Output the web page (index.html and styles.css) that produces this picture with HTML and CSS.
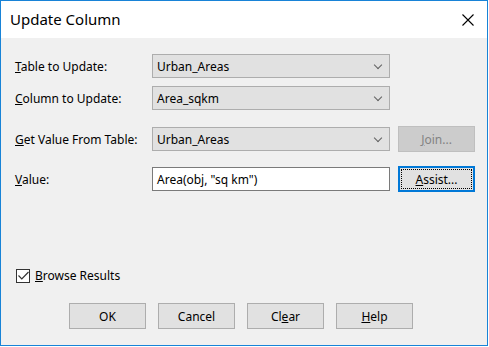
FILE: index.html
```html
<!DOCTYPE html>
<html lang="en">
<head>
  <meta charset="UTF-8">
  <title>Update Column</title>
  <link rel="stylesheet" href="styles.css">
</head>
<body>

  <div class="window">
    <div class="titlebar">
      <span class="title">Update Column</span>
      <svg class="close" width="12" height="12" viewBox="0 0 12 12">
        <path d="M0.5 0.5 L11.5 11.5 M11.5 0.5 L0.5 11.5" stroke="#000" stroke-width="1.1" fill="none"/>
      </svg>
    </div>

    <div class="content">
      <div class="row">
        <label><u>T</u>able to Update:</label>
        <div class="combo">Urban_Areas<span class="arrow"></span></div>
      </div>
      <div class="row gap-small">
        <label><u>C</u>olumn to Update:</label>
        <div class="combo">Area_sqkm<span class="arrow"></span></div>
      </div>
      <div class="row">
        <label><u>G</u>et Value From Table:</label>
        <div class="combo">Urban_Areas<span class="arrow"></span></div>
        <button class="btn disabled"><u>J</u>oin...</button>
      </div>
      <div class="row">
        <label><u>V</u>alue:</label>
        <div class="textbox">Area(obj, "sq km")</div>
        <button class="btn focused"><span class="focus-rect"><u>A</u>ssist...</span></button>
      </div>

      <div class="check-row">
        <span class="checkbox">
          <svg width="11" height="9" viewBox="0 0 11 9">
            <path d="M0.5 4.5 L3.8 7.8 L10.5 1" stroke="#333" stroke-width="1.2" fill="none"/>
          </svg>
        </span>
        <span><u>B</u>rowse Results</span>
      </div>

      <div class="buttons">
        <button class="btn">OK</button>
        <button class="btn">Cancel</button>
        <button class="btn">Cl<u>e</u>ar</button>
        <button class="btn"><u>H</u>elp</button>
      </div>
    </div>
  </div>

</body>
</html>
```

FILE: styles.css
```css
body {
  margin: 0;
  font-family: "Noto Sans", "Liberation Sans", sans-serif;
  font-size: 12px;
  color: #000;
  background: #fff;
}
.window {
  width: 488px;
  height: 346px;
  box-sizing: border-box;
  border: 1px solid #1883d7;
  background: #f0f0f0;
  display: flex;
  flex-direction: column;
}
.titlebar {
  height: 37px;
  background: #fff;
  display: flex;
  align-items: center;
  justify-content: space-between;
  padding: 0 13px 0 9px;
  flex-shrink: 0;
}
.title {
  font-size: 15px;
  margin-top: -1px;
}
.content {
  padding: 16px 0 0 14px;
}
.row {
  display: grid;
  grid-template-columns: 129px 238px 77px;
  column-gap: 8px;
  align-items: center;
  height: 24px;
  margin-bottom: 16px;
}
.row.gap-small {
  margin-top: -8px;
}
.row label {
  white-space: nowrap;
}
.combo, .textbox {
  height: 24px;
  box-sizing: border-box;
  border: 1px solid #adadad;
  background: #e1e1e1;
  padding: 0 0 0 4px;
  display: flex;
  align-items: center;
  position: relative;
}
.textbox {
  background: #fff;
  border-color: #7a7a7a;
}
.arrow {
  position: absolute;
  right: 8px;
  top: 7px;
  width: 5px;
  height: 5px;
  border-right: 1px solid #606060;
  border-bottom: 1px solid #606060;
  transform: rotate(45deg);
}
.btn {
  height: 26px;
  width: 77px;
  box-sizing: border-box;
  border: 1px solid #adadad;
  background: #e1e1e1;
  font: inherit;
  color: #000;
  padding: 0;
}
.btn.disabled {
  background: #cccccc;
  border-color: #bfbfbf;
  color: #838383;
}
.btn.focused {
  border: 2px solid #0078d7;
  padding: 1px;
}
.focus-rect {
  display: flex;
  height: 100%;
  align-items: center;
  justify-content: center;
  box-sizing: border-box;
  border: 1px dotted #000;
}
.check-row {
  display: flex;
  align-items: center;
  gap: 5px;
  margin-top: 77px;
  margin-left: 1px;
}
.checkbox {
  width: 14px;
  height: 14px;
  box-sizing: border-box;
  border: 1px solid #333;
  background: #fff;
  display: flex;
  align-items: center;
  justify-content: center;
}
.buttons {
  display: flex;
  gap: 12px;
  margin: 19px 0 0 54px;
}
```
